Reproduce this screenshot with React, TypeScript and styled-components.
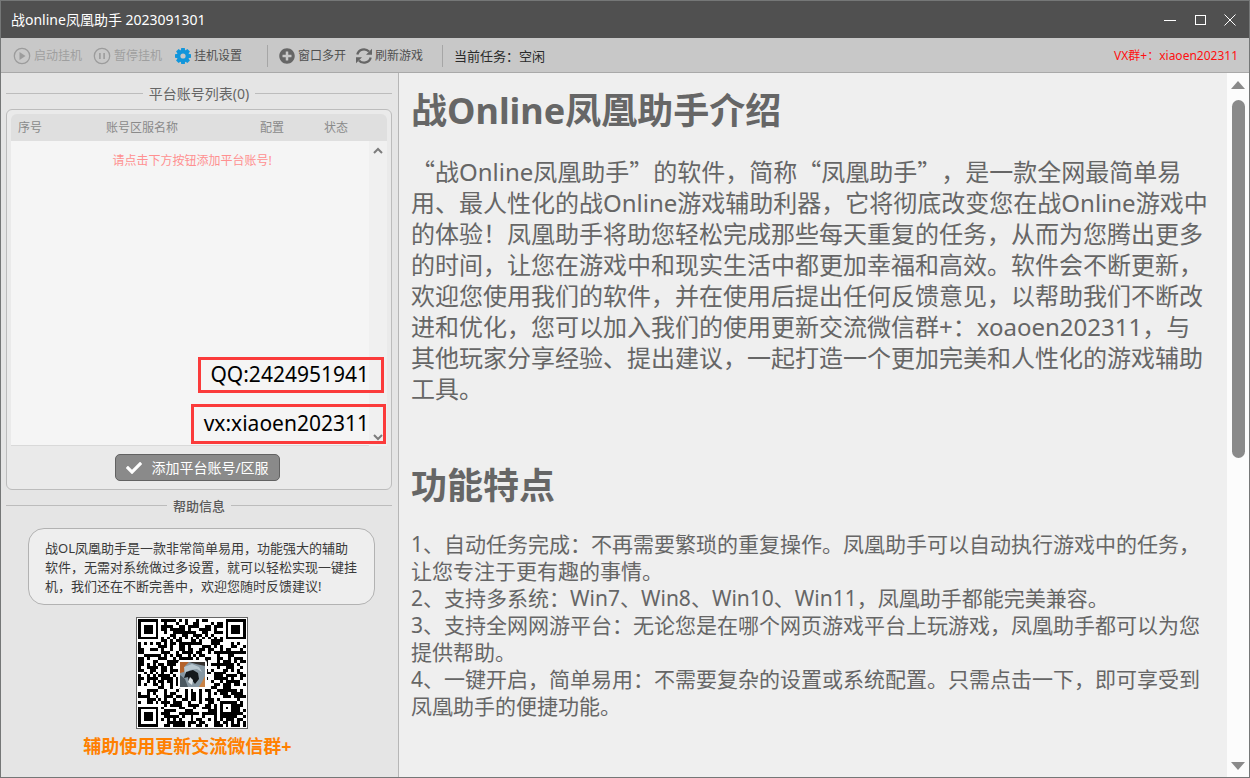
import React from "react";
import styled, { createGlobalStyle } from "styled-components";
import { FaCheck, FaPlusCircle } from "react-icons/fa";

const GlobalStyle = createGlobalStyle`
  * { box-sizing: border-box; }
  body {
    margin: 0;
    font-family: "Noto Sans", "Noto Sans CJK SC", sans-serif;
    text-spacing-trim: space-all;
    background: #efefef;
  }
  button { font-family: inherit; cursor: pointer; }
  h1, h2, p, ol, figure { margin: 0; padding: 0; }
`;

const Window = styled.div`
  min-height: 100vh;
  display: grid;
  grid-template-rows: 37px 35px 1fr;
  border: 1px solid #757777;
`;

const TitleBar = styled.header`
  display: flex;
  align-items: center;
  justify-content: space-between;
  padding: 0 11px 0 10px;
  background: #505050;
  color: #fff;
  font-size: 14px;
  line-height: 20px;
`;

const WindowButtons = styled.div`
  display: flex;
  gap: 14px;
`;

const WindowButton = styled.button`
  display: flex;
  align-items: center;
  justify-content: center;
  width: 16px;
  height: 16px;
  padding: 0;
  border: 0;
  background: none;
  color: #fff;
`;

const Toolbar = styled.nav`
  display: flex;
  align-items: center;
  padding: 1px 11px 0 12px;
  background: #c8c8c8;
  border-bottom: 1px solid #a9a9a9;
`;

const ToolButton = styled.button<{ $gap?: number }>`
  display: flex;
  align-items: center;
  gap: 3px;
  margin-right: ${(p) => p.$gap ?? 10}px;
  padding: 0;
  border: 0;
  background: none;
  color: #505050;
  font-size: 12px;
  line-height: 18px;
  white-space: nowrap;
  &:disabled { color: #9f9f9f; cursor: default; }
`;

const Divider = styled.span`
  width: 1px;
  height: 22px;
  margin-right: 11px;
  background: #a6a6a6;
`;

const TaskStatus = styled.span`
  color: #2a2a2a;
  font-size: 13px;
  line-height: 18px;
`;

const Contact = styled.span`
  margin-left: auto;
  color: #ff1010;
  font-size: 12px;
  line-height: 18px;
`;

const Body = styled.div`
  display: grid;
  grid-template-columns: 398px minmax(0, 1fr) 22px;
`;

const Sidebar = styled.aside`
  display: flex;
  flex-direction: column;
  padding: 5px 6px 0 5px;
  border-right: 1px solid #b6b6b6;
  background: #e5e5e5;
`;

const SectionTitle = styled.h2<{ $small?: boolean }>`
  display: flex;
  align-items: center;
  gap: 6px;
  height: 31px;
  color: ${(p) => (p.$small ? "#5a5a5a" : "#666")};
  font-size: ${(p) => (p.$small ? 13 : 14)}px;
  font-weight: ${(p) => (p.$small ? 500 : 400)};
  line-height: 20px;
  &::before, &::after {
    content: "";
    flex: 1;
    height: 1px;
    background: #bcbcbc;
  }
`;

const AccountPanel = styled.section`
  position: relative;
  display: flex;
  flex-direction: column;
  align-items: center;
  padding: 4px 4px 8px;
  border: 1px solid #bcbcbc;
  border-radius: 6px;
  background: #eaeaea;
`;

const AccountTable = styled.table`
  width: 100%;
  table-layout: fixed;
  border-collapse: separate;
  border-spacing: 0;
  border-radius: 6px 6px 0 0;
  overflow: hidden;
  font-size: 12px;
  line-height: 18px;
`;

const HeadCell = styled.th<{ $left?: boolean }>`
  height: 27px;
  padding: 0 0 0 ${(p) => (p.$left ? 7 : 0)}px;
  background: #dfdfdf;
  color: #8a8a8a;
  font-weight: 400;
  text-align: ${(p) => (p.$left ? "left" : "center")};
`;

const EmptyCell = styled.td`
  height: 305px;
  padding: 11px 0 0 4px;
  border-bottom: 1px solid #d9d9d9;
  background: #f5f5f5;
  color: #ff9090;
  text-align: center;
  vertical-align: top;
`;

const ScrollCell = styled.td`
  padding: 0;
  background: #f0f0f0;
`;

const ListScroll = styled.div`
  display: flex;
  flex-direction: column;
  align-items: center;
  justify-content: space-between;
  height: 305px;
  padding: 6px 0 5px;
`;

const ScrollButton = styled.button`
  display: flex;
  padding: 0;
  border: 0;
  background: none;
  color: #7c7c7c;
`;

const AddButton = styled.button`
  display: flex;
  align-items: center;
  gap: 9px;
  height: 27px;
  margin-top: 8px;
  margin-right: 3px;
  padding: 0 10px;
  border: 1px solid #626262;
  border-radius: 5px;
  background: #8a8a8a;
  color: #fff;
  font-size: 14px;
  line-height: 20px;
`;

const Stamps = styled.div`
  position: absolute;
  right: 5px;
  bottom: 45px;
  display: flex;
  flex-direction: column;
  align-items: flex-end;
  gap: 11px;
`;

const Stamp = styled.span<{ $inset?: boolean }>`
  display: flex;
  align-items: center;
  height: ${(p) => (p.$inset ? 36 : 40)}px;
  margin-right: ${(p) => (p.$inset ? 2 : 0)}px;
  padding: 0 ${(p) => (p.$inset ? 12 : 14)}px 2px ${(p) => (p.$inset ? 9 : 10)}px;
  border: 3px solid #fb3b3b;
  color: #000;
  font-size: 21px;
  line-height: 28px;
`;

const HelpText = styled.p`
  margin: 7px 17px 0 22px;
  padding: 10px 16px 8px;
  border: 1px solid #b2b2b2;
  border-radius: 16px;
  background: #eee;
  color: #3a3a3a;
  font-size: 13px;
  line-height: 19px;
`;

const GroupCode = styled.figure`
  display: flex;
  flex-direction: column;
  align-items: center;
  gap: 4px;
  margin-top: 12px;
  padding-right: 15px;
`;

const CodeFrame = styled.div`
  width: 112px;
  height: 112px;
  padding: 1px;
  border: 1px solid #666;
  background: #fff;
`;

const CodeCaption = styled.figcaption`
  padding-right: 8px;
  color: #ff8000;
  font-size: 18px;
  font-weight: 700;
  line-height: 26px;
`;

const Article = styled.main`
  padding: 14px 15px 0 12px;
  background: #efefef;
  color: #666;
`;

const Heading = styled.h1`
  font-size: 36px;
  font-weight: 700;
  line-height: 48px;
`;

const Intro = styled.p`
  margin: 20px 0 58px;
  font-size: 24px;
  line-height: 31px;
`;

const Quote = styled.span`
  font-family: "Noto Sans CJK SC", sans-serif;
`;

const FeatureList = styled.ol`
  margin: 21px 0 0;
  list-style: none;
  font-size: 21px;
  line-height: 27px;
`;

const PageScroll = styled.div`
  display: grid;
  grid-template-rows: auto 1fr auto;
  justify-items: center;
  gap: 11px;
  padding: 8px 0 7px;
  background: #fcfcfc;
`;

const ScrollTrack = styled.div`
  width: 13px;
`;

const ScrollThumb = styled.div`
  height: 55%;
  border-radius: 7px;
  background: #8a8a8a;
`;

const PlayIcon = () => (
  <svg width="18" height="18" viewBox="0 0 18 18" aria-hidden="true">
    <circle cx="9" cy="9" r="7.7" fill="none" stroke="#9c9c9c" strokeWidth="1.3" />
    <path d="M6.5 5v8l6-4z" fill="#9c9c9c" />
  </svg>
);

const PauseIcon = () => (
  <svg width="18" height="18" viewBox="0 0 18 18" aria-hidden="true">
    <circle cx="9" cy="9" r="7.7" fill="none" stroke="#9c9c9c" strokeWidth="1.3" />
    <path d="M6.9 6v6M11.1 6v6" stroke="#9c9c9c" strokeWidth="1.6" />
  </svg>
);

const GearIcon = () => (
  <svg width="16" height="16" viewBox="0 0 16 16" aria-hidden="true" fill="#1296db">
    {[0, 45, 90, 135].map((a) => (
      <path key={a} d="M6.2 0h3.6l.5 3v10l-.5 3H6.2l-.5-3V3z" transform={`rotate(${a} 8 8)`} />
    ))}
    <circle cx="8" cy="8" r="6" />
    <circle cx="8" cy="8" r="2.6" fill="#c8c8c8" />
  </svg>
);

const RefreshIcon = () => (
  <svg width="16" height="16" viewBox="0 0 16 16" aria-hidden="true">
    <g fill="none" stroke="#666" strokeWidth="2.3">
      <path d="M1.3 6.6A6.8 6.8 0 0 1 13 3.6" />
      <path d="M14.7 9.4A6.8 6.8 0 0 1 3 12.4" />
    </g>
    <path d="M16 .8v6h-6zM0 15.2v-6h6z" fill="#666" />
  </svg>
);

const ChevronIcon = ({ down }: { down?: boolean }) => (
  <svg width="10" height="8" viewBox="0 0 10 8" aria-hidden="true">
    <path d={down ? "M1 2l4 4 4-4" : "M1 6l4-4 4 4"} fill="none" stroke="currentColor" strokeWidth="2" />
  </svg>
);

const TriangleIcon = ({ down }: { down?: boolean }) => (
  <svg width="14" height="8" viewBox="0 0 14 8" aria-hidden="true">
    <path d={down ? "M0 0h14L7 8z" : "M0 8h14L7 0z"} fill="#8a8a8a" />
  </svg>
);

const CODE_SIZE = 37;

const ringAt = (x: number, y: number, cx: number, cy: number) =>
  Math.max(Math.abs(x - cx), Math.abs(y - cy));

// Finder squares, timing lines and one alignment square, with data modules between them.
function codePath(): string {
  let seed = 20230913;
  let d = "";
  for (let y = 0; y < CODE_SIZE; y++) {
    for (let x = 0; x < CODE_SIZE; x++) {
      seed = (Math.imul(seed, 1664525) + 1013904223) >>> 0;
      let dark = (seed >>> 16) % 100 < 54;
      if (y === 6 || x === 6) dark = (x + y) % 2 === 0;
      const align = ringAt(x, y, 30, 30);
      if (align <= 2) dark = align !== 1;
      for (const [cx, cy] of [[3, 3], [33, 3], [3, 33]]) {
        const ring = ringAt(x, y, cx, cy);
        if (ring <= 4) dark = ring !== 2 && ring !== 4;
      }
      if (dark) d += `M${x} ${y}h1v1h-1z`;
    }
  }
  return d;
}

const GroupQrCode = () => (
  <svg width="108" height="108" viewBox="0 0 108 108" role="img" aria-label="微信群二维码">
    <path d={codePath()} transform={`scale(${108 / CODE_SIZE})`} fill="#000" shapeRendering="crispEdges" />
    <rect x="40" y="41" width="29" height="29" rx="3" fill="#fff" />
    <rect x="42" y="43" width="25" height="25" rx="2" fill="#8798a3" />
    <path d="M42 43h9l-4 4-1 6-4 1z" fill="#b5642d" />
    <path d="M51 43h16v4l-9-2z" fill="#34302d" />
    <path d="M67 57v11h-6l3-5z" fill="#c98347" />
    <path d="M42 56l5 4 3 8h-8z" fill="#4c5961" />
    <path d="M46 48l8-3 7 3 3 5-5-3-7 1-5 4z" fill="#b9c8d0" />
    <path d="M48 53l7-2 5 3 1 6-4 5-3-4-3 3-1-6-4 1z" fill="#14191c" />
    <path d="M52 58l3 3-1 5-4-3z" fill="#dbe2e5" />
  </svg>
);

const features = [
  "1、自动任务完成：不再需要繁琐的重复操作。凤凰助手可以自动执行游戏中的任务，让您专注于更有趣的事情。",
  "2、支持多系统：Win7、Win8、Win10、Win11，凤凰助手都能完美兼容。",
  "3、支持全网网游平台：无论您是在哪个网页游戏平台上玩游戏，凤凰助手都可以为您提供帮助。",
  "4、一键开启，简单易用：不需要复杂的设置或系统配置。只需点击一下，即可享受到凤凰助手的便捷功能。",
];

export default function App() {
  return (
    <>
      <GlobalStyle />
      <Window>
        <TitleBar>
          <span>战online凤凰助手 2023091301</span>
          <WindowButtons>
            <WindowButton aria-label="最小化">
              <svg width="12" height="12"><path d="M0 6.5h12" stroke="currentColor" /></svg>
            </WindowButton>
            <WindowButton aria-label="最大化">
              <svg width="12" height="12"><rect x="1.5" y="1.5" width="10" height="9" fill="none" stroke="currentColor" /></svg>
            </WindowButton>
            <WindowButton aria-label="关闭">
              <svg width="12" height="12"><path d="M.5 .5l11 11M11.5 .5l-11 11" stroke="currentColor" /></svg>
            </WindowButton>
          </WindowButtons>
        </TitleBar>

        <Toolbar>
          <ToolButton disabled $gap={11}><PlayIcon />启动挂机</ToolButton>
          <ToolButton disabled $gap={13}><PauseIcon />暂停挂机</ToolButton>
          <ToolButton $gap={25}><GearIcon />挂机设置</ToolButton>
          <Divider />
          <ToolButton><FaPlusCircle size={16} color="#666" />窗口多开</ToolButton>
          <ToolButton $gap={19}><RefreshIcon />刷新游戏</ToolButton>
          <Divider />
          <TaskStatus>当前任务：空闲</TaskStatus>
          <Contact>VX群+：xiaoen202311</Contact>
        </Toolbar>

        <Body>
          <Sidebar>
            <SectionTitle>平台账号列表(0)</SectionTitle>
            <AccountPanel>
              <AccountTable>
                <colgroup>
                  <col width="39" />
                  <col width="184" />
                  <col width="76" />
                  <col width="52" />
                  <col />
                  <col width="18" />
                </colgroup>
                <thead>
                  <tr>
                    <HeadCell $left>序号</HeadCell>
                    <HeadCell>账号区服名称</HeadCell>
                    <HeadCell>配置</HeadCell>
                    <HeadCell>状态</HeadCell>
                    <HeadCell colSpan={2} />
                  </tr>
                </thead>
                <tbody>
                  <tr>
                    <EmptyCell colSpan={5}>请点击下方按钮添加平台账号!</EmptyCell>
                    <ScrollCell>
                      <ListScroll>
                        <ScrollButton aria-label="向上滚动"><ChevronIcon /></ScrollButton>
                        <ScrollButton aria-label="向下滚动"><ChevronIcon down /></ScrollButton>
                      </ListScroll>
                    </ScrollCell>
                  </tr>
                </tbody>
              </AccountTable>
              <AddButton><FaCheck size={16} />添加平台账号/区服</AddButton>
              <Stamps>
                <Stamp $inset>QQ:2424951941</Stamp>
                <Stamp>vx:xiaoen202311</Stamp>
              </Stamps>
            </AccountPanel>
            <SectionTitle $small>帮助信息</SectionTitle>
            <HelpText>
              战OL凤凰助手是一款非常简单易用，功能强大的辅助软件，无需对系统做过多设置，就可以轻松实现一键挂机，我们还在不断完善中，欢迎您随时反馈建议!
            </HelpText>
            <GroupCode>
              <CodeFrame><GroupQrCode /></CodeFrame>
              <CodeCaption>辅助使用更新交流微信群+</CodeCaption>
            </GroupCode>
          </Sidebar>

          <Article>
            <Heading>战Online凤凰助手介绍</Heading>
            <Intro>
              <Quote>“</Quote>战Online凤凰助手<Quote>”</Quote>的软件，简称<Quote>“</Quote>凤凰助手<Quote>”</Quote>，是一款全网最简单易用、最人性化的战Online游戏辅助利器，它将彻底改变您在战Online游戏中的体验！凤凰助手将助您轻松完成那些每天重复的任务，从而为您腾出更多的时间，让您在游戏中和现实生活中都更加幸福和高效。软件会不断更新，欢迎您使用我们的软件，并在使用后提出任何反馈意见，以帮助我们不断改进和优化，您可以加入我们的使用更新交流微信群+：xoaoen202311，与其他玩家分享经验、提出建议，一起打造一个更加完美和人性化的游戏辅助工具。
            </Intro>
            <Heading as="h2">功能特点</Heading>
            <FeatureList>
              {features.map((text) => <li key={text}>{text}</li>)}
            </FeatureList>
          </Article>

          <PageScroll>
            <ScrollButton aria-label="页面向上滚动"><TriangleIcon /></ScrollButton>
            <ScrollTrack><ScrollThumb /></ScrollTrack>
            <ScrollButton aria-label="页面向下滚动"><TriangleIcon down /></ScrollButton>
          </PageScroll>
        </Body>
      </Window>
    </>
  );
}
